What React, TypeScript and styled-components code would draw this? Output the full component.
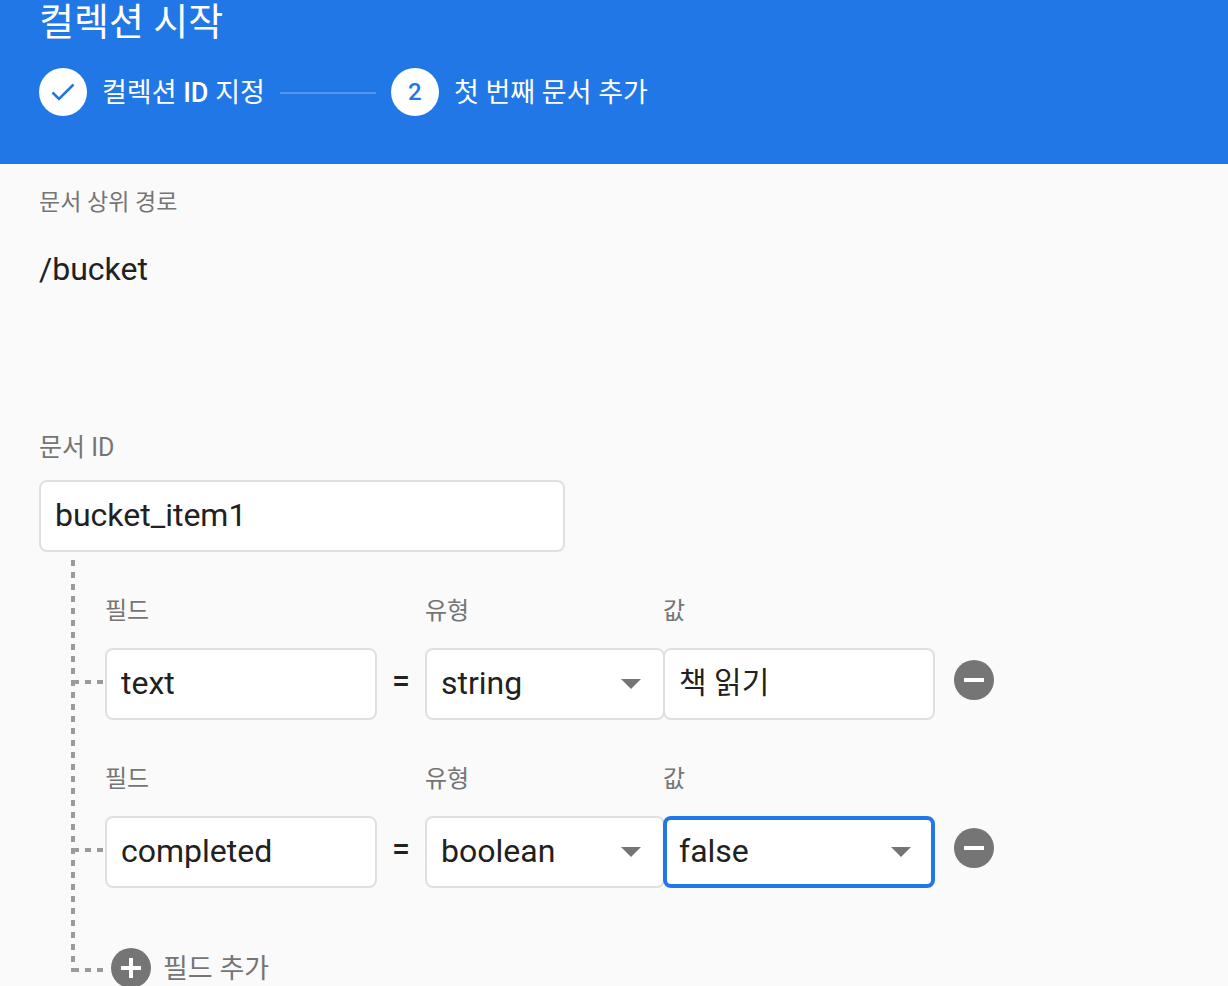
import React, { useId, useState } from "react";
import styled, { createGlobalStyle, css } from "styled-components";

const color = {
  primary: "#2277e6",
  page: "#fafafa",
  text: "#212121",
  muted: "#757575",
  border: "#e0e0e0",
  dots: "#9b9b9b",
};

const GlobalStyle = createGlobalStyle`
  * { box-sizing: border-box; }
  body {
    margin: 0;
    background: ${color.page};
    color: ${color.text};
    font-family: Roboto, "Noto Sans CJK KR", sans-serif;
  }
  button, input, select { font: inherit; color: inherit; }
`;

const Page = styled.form`
  height: 100vh;
  overflow: hidden auto;
  scrollbar-width: none;
`;

const Header = styled.header`
  background: ${color.primary};
  color: #fff;
  padding: 0 39px 48px;
`;

const Title = styled.h1`
  margin: 0 0 24px;
  font-size: 38px;
  line-height: 44px;
  font-weight: 400;
`;

const Steps = styled.ol`
  display: flex;
  align-items: center;
  gap: 15px;
  margin: 0;
  padding: 0;
  list-style: none;
`;

const Step = styled.li`
  display: flex;
  align-items: center;
  gap: 15px;
  font-size: 27px;
  line-height: 48px;
  white-space: nowrap;
`;

const StepText = styled.span`
  padding-top: 2px;
  line-height: 46px;
`;

const Latin = styled.span`
  font-weight: 500;
`;

const StepMark = styled.span`
  display: flex;
  align-items: center;
  justify-content: center;
  width: 48px;
  height: 48px;
  border-radius: 50%;
  background: #fff;
  color: ${color.primary};
  font-size: 24px;
  font-weight: 500;
`;

const StepLine = styled.li`
  width: 96px;
  height: 2px;
  margin-top: 2px;
  background: #5595ec;
`;

const Main = styled.main`
  padding: 23px 39px 0;
`;

const PathLabel = styled.div`
  margin-bottom: 30px;
  font-size: 23px;
  line-height: 32px;
  color: ${color.muted};
`;

const PathValue = styled.div`
  margin-bottom: 143px;
  font-size: 32px;
  line-height: 40px;
`;

const DocumentField = styled.div`
  max-width: 526px;
`;

const Label = styled.label<{ $gap: number; $size?: number }>`
  display: block;
  margin-bottom: ${(p) => p.$gap}px;
  font-size: ${(p) => p.$size ?? 24}px;
  line-height: 32px;
  color: ${color.muted};
`;

const controlStyle = css`
  display: block;
  width: 100%;
  height: 72px;
  margin: 0;
  padding: 0 14px 2px;
  border: 2px solid ${color.border};
  border-radius: 8px;
  outline: none;
  background: #fff;
  line-height: 40px;
`;

const TextInput = styled.input<{ $hangul?: boolean }>`
  ${controlStyle}
  font-size: 32px;
  ${(p) =>
    p.$hangul &&
    css`
      padding-bottom: 8px;
      font-size: 30px;
    `}
`;

const Select = styled.select<{ $active?: boolean }>`
  ${controlStyle}
  appearance: none;
  font-size: 32px;
  ${(p) =>
    p.$active &&
    css`
      padding: 0 12px 2px;
      border: 4px solid ${color.primary};
    `}
`;

const SelectBox = styled.div`
  position: relative;
`;

const Arrow = styled.svg`
  position: absolute;
  right: 24px;
  top: 31px;
  pointer-events: none;
`;

const Tree = styled.div`
  margin: 8px 0 0 32px;
  background: repeating-linear-gradient(
      to bottom,
      ${color.dots} 0 6px,
      transparent 6px 12px
    )
    left top / 4px calc(100% - 16px) no-repeat;
`;

const FieldRow = styled.div`
  display: flex;
  align-items: flex-end;
  padding: 35px 0 8px;
`;

const Branch = styled.span<{ $bottom: number }>`
  flex: none;
  width: 30px;
  height: 4px;
  margin: 0 2px ${(p) => p.$bottom}px;
  background: repeating-linear-gradient(
    to right,
    ${color.dots} 0 6px,
    transparent 6px 12px
  );
`;

const Field = styled.div<{ $width: number; $overlap?: boolean }>`
  flex: 0 1 ${(p) => p.$width}px;
  min-width: 0;
  position: relative;
  margin-left: ${(p) => (p.$overlap ? "-2px" : "0")};
`;

const Equals = styled.span`
  flex: none;
  width: 48px;
  font-size: 32px;
  font-weight: 500;
  line-height: 80px;
  text-align: center;
`;

const IconButton = styled.button`
  flex: none;
  display: flex;
  margin: 0 0 20px 19px;
  padding: 0;
  border: 0;
  border-radius: 50%;
  background: none;
  cursor: pointer;
`;

const AddRow = styled.div`
  display: flex;
  align-items: flex-end;
  padding-top: 52px;
`;

const AddButton = styled.button`
  display: flex;
  align-items: center;
  gap: 12px;
  margin-left: 6px;
  padding: 0;
  border: 0;
  background: none;
  color: ${color.muted};
  font-size: 27px;
  line-height: 40px;
  cursor: pointer;
`;

const AddText = styled.span`
  padding-top: 2px;
  line-height: 38px;
`;

const CircleIcon = ({ plus }: { plus?: boolean }) => (
  <svg width="40" height="40" viewBox="0 0 40 40" aria-hidden="true">
    <circle cx="20" cy="20" r="20" fill={color.muted} />
    <path
      d={plus ? "M10 20H30M20 10V30" : "M10 20H30"}
      stroke="#fff"
      strokeWidth="4"
    />
  </svg>
);

type DropdownProps = {
  id: string;
  options: string[];
  value: string;
  active?: boolean;
};

function Dropdown({ id, options, value, active }: DropdownProps) {
  const [current, setCurrent] = useState(value);
  return (
    <SelectBox>
      <Select
        id={id}
        $active={active}
        value={current}
        onChange={(e) => setCurrent(e.target.value)}
      >
        {options.map((o) => (
          <option key={o}>{o}</option>
        ))}
      </Select>
      <Arrow width="20" height="10" viewBox="0 0 20 10" aria-hidden="true">
        <path d="M0 0H20L10 10Z" fill={color.muted} />
      </Arrow>
    </SelectBox>
  );
}

type RowProps = { name: string; type: string; value: string };

function DocumentRow({ name, type, value }: RowProps) {
  const id = useId();
  return (
    <FieldRow>
      <Branch $bottom={36} />
      <Field $width={272}>
        <Label $gap={21} htmlFor={`${id}-name`}>필드</Label>
        <TextInput id={`${id}-name`} defaultValue={name} />
      </Field>
      <Equals>=</Equals>
      <Field $width={240}>
        <Label $gap={21} htmlFor={`${id}-type`}>유형</Label>
        <Dropdown
          id={`${id}-type`}
          options={["string", "number", "boolean"]}
          value={type}
        />
      </Field>
      <Field $width={272} $overlap>
        <Label $gap={21} htmlFor={`${id}-value`}>값</Label>
        {type === "boolean" ? (
          <Dropdown
            id={`${id}-value`}
            options={["true", "false"]}
            value={value}
            active
          />
        ) : (
          <TextInput id={`${id}-value`} $hangul defaultValue={value} />
        )}
      </Field>
      <IconButton type="button" aria-label="필드 삭제">
        <CircleIcon />
      </IconButton>
    </FieldRow>
  );
}

export default function App() {
  return (
    <Page>
      <GlobalStyle />
      <Header>
        <Title>컬렉션 시작</Title>
        <Steps>
          <Step>
            <StepMark>
              <svg width="24" height="20" viewBox="0 0 24 20" aria-hidden="true">
                <path
                  d="M1.5 10.5L8 17L22.5 2.5"
                  fill="none"
                  stroke="currentColor"
                  strokeWidth="2.6"
                />
              </svg>
            </StepMark>
            <StepText>
              컬렉션 <Latin>ID</Latin> 지정
            </StepText>
          </Step>
          <StepLine aria-hidden="true" />
          <Step aria-current="step">
            <StepMark>2</StepMark>
            <StepText>첫 번째 문서 추가</StepText>
          </Step>
        </Steps>
      </Header>
      <Main>
        <PathLabel>문서 상위 경로</PathLabel>
        <PathValue>/bucket</PathValue>
        <DocumentField>
          <Label $gap={16} $size={25} htmlFor="document-id">문서 ID</Label>
          <TextInput id="document-id" defaultValue="bucket_item1" />
        </DocumentField>
        <Tree>
          <DocumentRow name="text" type="string" value="책 읽기" />
          <DocumentRow name="completed" type="boolean" value="false" />
          <AddRow>
            <Branch $bottom={16} />
            <AddButton type="button">
              <CircleIcon plus />
              <AddText>필드 추가</AddText>
            </AddButton>
          </AddRow>
        </Tree>
      </Main>
    </Page>
  );
}
